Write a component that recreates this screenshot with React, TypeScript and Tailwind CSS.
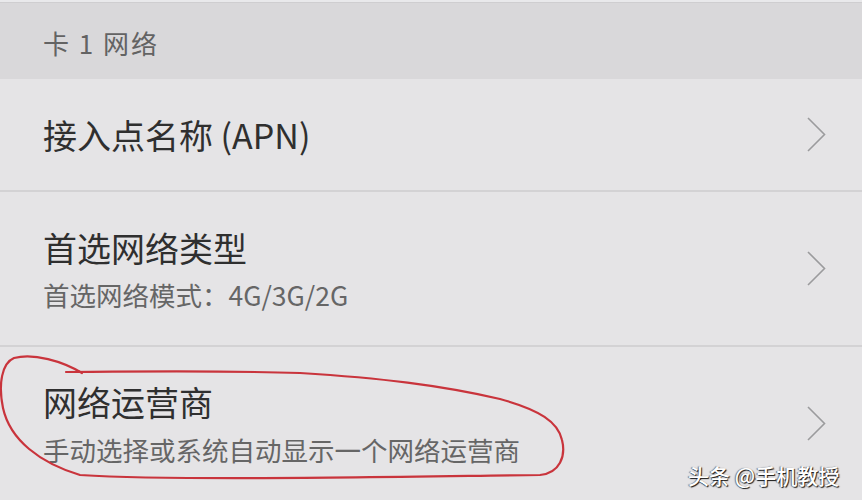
const font = { fontFamily: '"Noto Sans CJK SC", "Noto Sans", sans-serif' };

function Chevron() {
  return (
    <svg width="19" height="35" viewBox="0 0 19 35" className="shrink-0">
      <polyline points="1,1 17.5,17.5 1,34" fill="none" stroke="#9b9b9d" strokeWidth="1.6" />
    </svg>
  );
}

export default function App() {
  return (
    <div
      className="relative w-[862px] h-[500px] overflow-hidden bg-[#e5e4e6] flex flex-col"
      style={font}
    >
      <div className="h-[3px] bg-[#e9e9eb] border-b border-[#cfced0]" />

      <div className="h-[76px] bg-[#d9d8da] flex items-center pl-[43px] pt-[3px]">
        <span className="text-[26px] leading-none text-[#636363] tracking-[2px]">卡 1 网络</span>
      </div>

      <div className="h-[113px] flex items-center justify-between pl-[43px] pr-[36px] border-b-2 border-[#d3d2d4]">
        <span className="text-[34px] leading-[40px] text-[#2f2f2f]">接入点名称 (APN)</span>
        <Chevron />
      </div>

      <div className="h-[155px] flex items-center justify-between pl-[43px] pr-[36px] border-b-2 border-[#d3d2d4]">
        <div className="flex flex-col gap-[11px] pt-[2px]">
          <span className="text-[34px] leading-[40px] text-[#2f2f2f]">首选网络类型</span>
          <span className="text-[26.5px] leading-[32px] text-[#666666]">首选网络模式：4G/3G/2G</span>
        </div>
        <Chevron />
      </div>

      <div className="flex-1 flex items-center justify-between pl-[43px] pr-[36px]">
        <div className="flex flex-col gap-[12px] pt-[1px]">
          <span className="text-[34px] leading-[40px] text-[#2f2f2f]">网络运营商</span>
          <span className="text-[26.5px] leading-[32px] text-[#666666]">手动选择或系统自动显示一个网络运营商</span>
        </div>
        <Chevron />
      </div>

      <svg className="absolute left-0 top-0 pointer-events-none" width="862" height="500" viewBox="0 0 862 500">
        <path
          d="M 82 373 C 62 361, 34 353, 14 358 C 2 363, -2 384, 3 408 C 10 440, 40 463, 80 475 C 180 481, 380 477, 540 475 C 560 473, 566 456, 562 440 C 558 422, 540 410, 500 399 C 440 385, 380 378, 300 373 C 200 370, 120 372, 66 372"
          fill="none"
          stroke="#c9343c"
          strokeWidth="2.2"
          strokeLinecap="round"
        />
      </svg>

      <span className="absolute left-[688px] top-[462px] text-[21px] leading-[26px] font-medium text-white [text-shadow:1px_1px_1px_rgba(0,0,0,0.9),-1px_0_1px_rgba(0,0,0,0.5)]">
        头条 @手机教授
      </span>
    </div>
  );
}
